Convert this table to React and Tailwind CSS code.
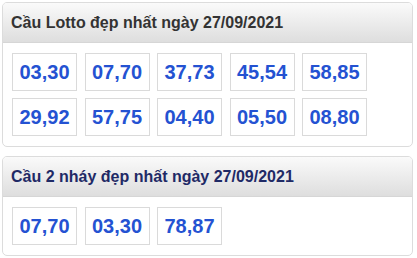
const lotto = [
  ['03,30', '07,70', '37,73', '45,54', '58,85'],
  ['29,92', '57,75', '04,40', '05,50', '08,80'],
];
const twoHits = [['07,70', '03,30', '78,87']];

function Panel({ title, titleClass, rows }) {
  return (
    <div className="w-[411px] ml-[2px] rounded-[5px] border border-[#dcdcdc] bg-white overflow-hidden">
      <div className="h-[40px] flex items-center pl-[8px] pt-[1px] bg-gradient-to-b from-[#fafafa] to-[#dedede] border-b border-[#d6d6d6]">
        <h3 className={`text-[16px] font-bold ${titleClass}`}>{title}</h3>
      </div>
      <div className="flex flex-col gap-[7px] px-[9px] pt-[10px] pb-[10px]">
        {rows.map((row, i) => (
          <div key={i} className="flex gap-[7.5px]">
            {row.map((n) => (
              <div
                key={n}
                className="w-[65px] h-[38px] flex items-center justify-center border border-[#dadada] text-[20px] font-bold text-[#2452d2]"
              >
                {n}
              </div>
            ))}
          </div>
        ))}
      </div>
    </div>
  );
}

export default function App() {
  return (
    <div className="w-[417px] h-[258px] bg-white pt-[2px] flex flex-col gap-[9px]" style={{ fontFamily: '"Liberation Sans", Arial, sans-serif' }}>
      <Panel title="Cầu Lotto đẹp nhất ngày 27/09/2021" titleClass="text-[#333333]" rows={lotto} />
      <Panel title="Cầu 2 nháy đẹp nhất ngày 27/09/2021" titleClass="text-[#1f2a66]" rows={twoHits} />
    </div>
  );
}
